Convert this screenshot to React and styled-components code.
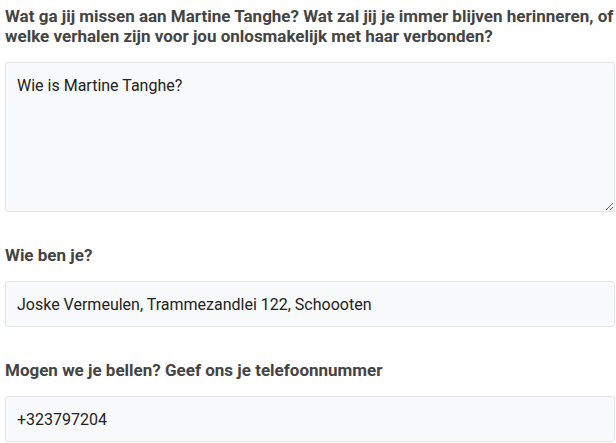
import React from "react";
import styled, { createGlobalStyle } from "styled-components";

const Global = createGlobalStyle`
  html, body { margin: 0; padding: 0; background: #ffffff; }
  body { font-family: Roboto, "Liberation Sans", Arial, sans-serif; }
  * { box-sizing: border-box; }
`;

const Form = styled.form`
  display: flex;
  flex-direction: column;
  gap: 33px;
  padding: 6px 1px 0 5px;
  width: 616px;
`;

const Field = styled.div`
  display: flex;
  flex-direction: column;
  gap: 16px;
`;

const Label = styled.label`
  font-family: Roboto, "Liberation Sans", Arial, sans-serif;
  font-weight: 700;
  font-size: 17px;
  line-height: 20px;
  color: #444444;
`;

const controlBase = `
  display: block;
  width: 100%;
  font-family: Roboto, "Liberation Sans", Arial, sans-serif;
  font-size: 16px;
  color: #222222;
  background: #f8f9fa;
  border: 1px solid #e3e5e8;
  border-radius: 3px;
  outline: none;
  margin: 0;
`;

const TextArea = styled.textarea`
  ${controlBase}
  height: 150px;
  padding: 11px 11px;
  line-height: 24px;
  resize: vertical;
`;

const Input = styled.input`
  ${controlBase}
  height: 46px;
  padding: 11px 11px;
  line-height: 22px;
`;

export default function App() {
  return (
    <>
      <Global />
      <Form onSubmit={(e) => e.preventDefault()}>
        <Field>
          <Label htmlFor="herinnering">
            Wat ga jij missen aan Martine Tanghe? Wat zal jij je immer blijven herinneren, of welke verhalen zijn voor jou onlosmakelijk met haar verbonden?
          </Label>
          <TextArea id="herinnering" defaultValue="Wie is Martine Tanghe?" />
        </Field>
        <Field>
          <Label htmlFor="wie">Wie ben je?</Label>
          <Input id="wie" defaultValue="Joske Vermeulen, Trammezandlei 122, Schoooten" />
        </Field>
        <Field>
          <Label htmlFor="tel">Mogen we je bellen? Geef ons je telefoonnummer</Label>
          <Input id="tel" defaultValue="+323797204" />
        </Field>
      </Form>
    </>
  );
}
